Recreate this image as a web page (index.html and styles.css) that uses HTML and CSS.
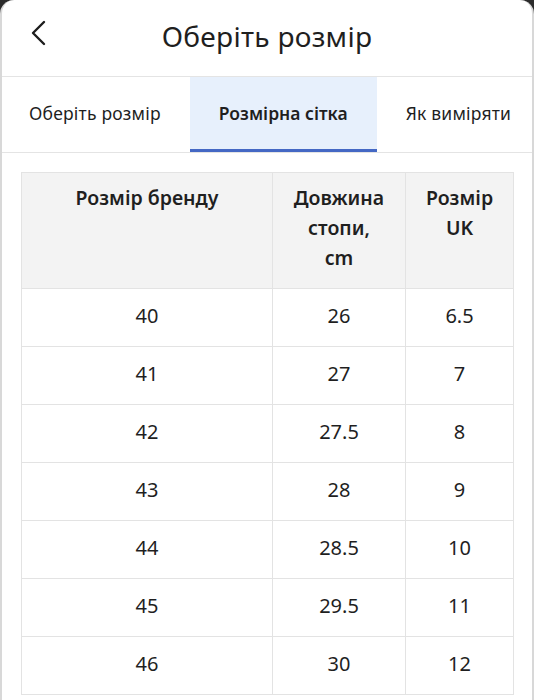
FILE: index.html
```html
<!DOCTYPE html>
<html lang="uk">
<head>
<meta charset="utf-8">
<title>Оберіть розмір</title>
<link rel="stylesheet" href="styles.css">
</head>
<body>
<div class="sheet">
  <header class="topbar">
    <button class="back" aria-label="Назад">
      <svg width="16" height="26" viewBox="0 0 16 26"><path d="M13 2 L2 13 L13 24" fill="none" stroke="#1d1d1d" stroke-width="2.4" stroke-linecap="round" stroke-linejoin="round"/></svg>
    </button>
    <h1 class="title">Оберіть розмір</h1>
  </header>
  <nav class="tabs">
    <div class="tab">Оберіть розмір</div>
    <div class="tab active">Розмірна сітка</div>
    <div class="tab">Як виміряти</div>
  </nav>
  <div class="content">
    <table class="sizes">
      <thead>
        <tr>
          <th class="c1">Розмір бренду</th>
          <th class="c2">Довжина<br>стопи,<br>cm</th>
          <th class="c3">Розмір<br>UK</th>
        </tr>
      </thead>
      <tbody>
        <tr><td>40</td><td>26</td><td>6.5</td></tr>
        <tr><td>41</td><td>27</td><td>7</td></tr>
        <tr><td>42</td><td>27.5</td><td>8</td></tr>
        <tr><td>43</td><td>28</td><td>9</td></tr>
        <tr><td>44</td><td>28.5</td><td>10</td></tr>
        <tr><td>45</td><td>29.5</td><td>11</td></tr>
        <tr><td>46</td><td>30</td><td>12</td></tr>
      </tbody>
    </table>
  </div>
</div>
</body>
</html>
```
FILE: styles.css
```css
* { box-sizing: border-box; }
html, body { margin: 0; padding: 0; }
body {
  background: #2b2b2b;
  font-family: "Noto Sans", "Open Sans", sans-serif;
  color: #1f1f1f;
  width: 534px;
  height: 700px;
  overflow: hidden;
}
.sheet {
  background: #fff;
  border-radius: 14px 14px 0 0;
  border-left: 2px solid #d8d8d8;
  border-right: 2px solid #d8d8d8;
  height: 700px;
  overflow: hidden;
}
.topbar {
  position: relative;
  height: 77px;
  display: flex;
  align-items: center;
  justify-content: center;
  border-bottom: 1px solid #e4e4e4;
}
.back {
  position: absolute;
  left: 28px;
  top: 20px;
  border: 0;
  background: none;
  padding: 0;
  width: 18px;
  height: 26px;
}
.title {
  margin: 0 0 4px;
  font-size: 28px;
  font-weight: 400;
  letter-spacing: 0.3px;
}
.tabs {
  display: flex;
  height: 76px;
  border-bottom: 1px solid #e4e4e4;
  overflow: hidden;
  margin-left: -2px;
}
.tab {
  flex: none;
  display: flex;
  align-items: center;
  padding: 0 29px 3px;
  font-size: 17.5px;
  letter-spacing: 0.2px;
  white-space: nowrap;
}
.tab.active {
  background: #e7f0fc;
  font-weight: 600;
  letter-spacing: 0;
  border-bottom: 3px solid #4468c4;
  padding-bottom: 0;
}
.content {
  padding: 19px 19px 0 19px;
}
.sizes {
  width: 492px;
  border-collapse: collapse;
  table-layout: fixed;
  font-size: 20px;
}
.sizes th, .sizes td {
  border: 1px solid #e3e3e3;
  text-align: center;
}
.sizes th {
  background: #f3f3f3;
  font-weight: 600;
  font-size: 19.5px;
  line-height: 30px;
  vertical-align: top;
  padding: 10px 2px 15px;
  height: 115px;
}
.sizes td {
  height: 58px;
  padding: 0 0 4px;
}
.c1 { width: 251px; }
.c2 { width: 133px; }
.c3 { width: 108px; }
```
